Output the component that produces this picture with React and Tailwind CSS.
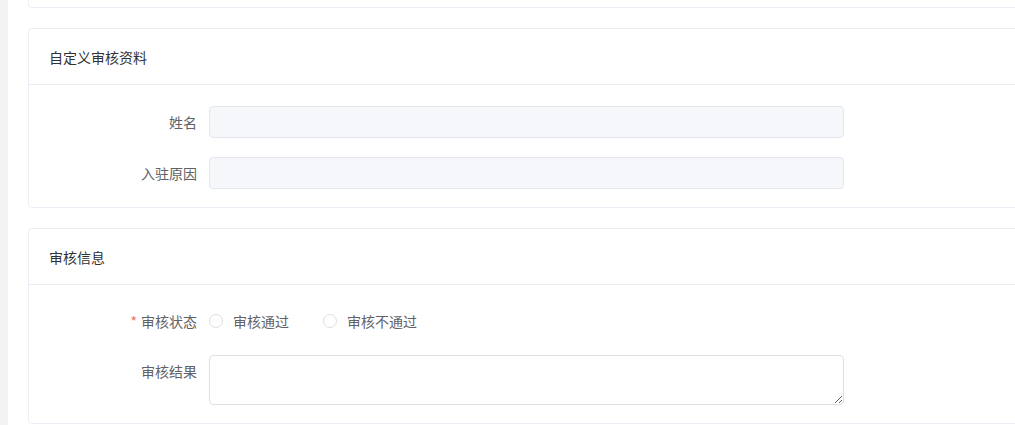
import React from 'react';

const font = { fontFamily: '"Noto Sans CJK SC", "Microsoft YaHei", sans-serif' };

const Card = ({ title, children }) => (
  <div className="w-[1010px] shrink-0 rounded border border-[#ebeef5] bg-white">
    <div className="flex h-[56px] items-center border-b border-[#ebeef5] px-5 text-sm text-[#303133]">{title}</div>
    {children}
  </div>
);

const FormRow = ({ label, required, top, children }) => (
  <div className={`flex ${top ? 'items-start' : 'items-center'}`}>
    <label className="flex h-8 w-[180px] shrink-0 items-center justify-end pr-3 text-sm text-[#606266]">
      {required && <span className="mr-1 text-[#f56c6c]">*</span>}
      {label}
    </label>
    {children}
  </div>
);

const Radio = ({ label }) => (
  <label className="mr-[34px] flex cursor-pointer items-center text-sm text-[#606266]">
    <span className="h-[14px] w-[14px] rounded-full border border-[#dcdfe6] bg-white"></span>
    <span className="pl-[10px]">{label}</span>
  </label>
);

const App = () => {
  return (
    <div className="flex h-[425px] w-[1015px] overflow-hidden bg-white" style={font}>
      <div className="w-2 shrink-0 bg-[#f2f3f5]"></div>
      <div className="flex flex-col gap-5 pl-5">
        <div className="h-2 w-[1010px] shrink-0 rounded-b border border-t-0 border-[#ebeef5] bg-white"></div>

        <Card title="自定义审核资料">
          <div className="flex flex-col gap-[19px] pt-[21px] pb-[18px]">
            <FormRow label="姓名">
              <div className="h-8 w-[635px] rounded border border-[#e4e7ed] bg-[#f5f7fa]"></div>
            </FormRow>
            <FormRow label="入驻原因">
              <div className="h-8 w-[635px] rounded border border-[#e4e7ed] bg-[#f5f7fa]"></div>
            </FormRow>
          </div>
        </Card>

        <Card title="审核信息">
          <div className="flex flex-col gap-[18px] pt-5 pb-[18px]">
            <FormRow label="审核状态" required>
              <div className="flex h-8 items-center">
                <Radio label="审核通过" />
                <Radio label="审核不通过" />
              </div>
            </FormRow>
            <FormRow label="审核结果" top>
              <textarea readOnly className="block h-[50px] w-[635px] resize-y rounded border border-[#dcdfe6] bg-white px-[15px] py-[5px] text-sm text-[#606266] outline-none"></textarea>
            </FormRow>
          </div>
        </Card>
      </div>
    </div>
  );
};

export default App;
